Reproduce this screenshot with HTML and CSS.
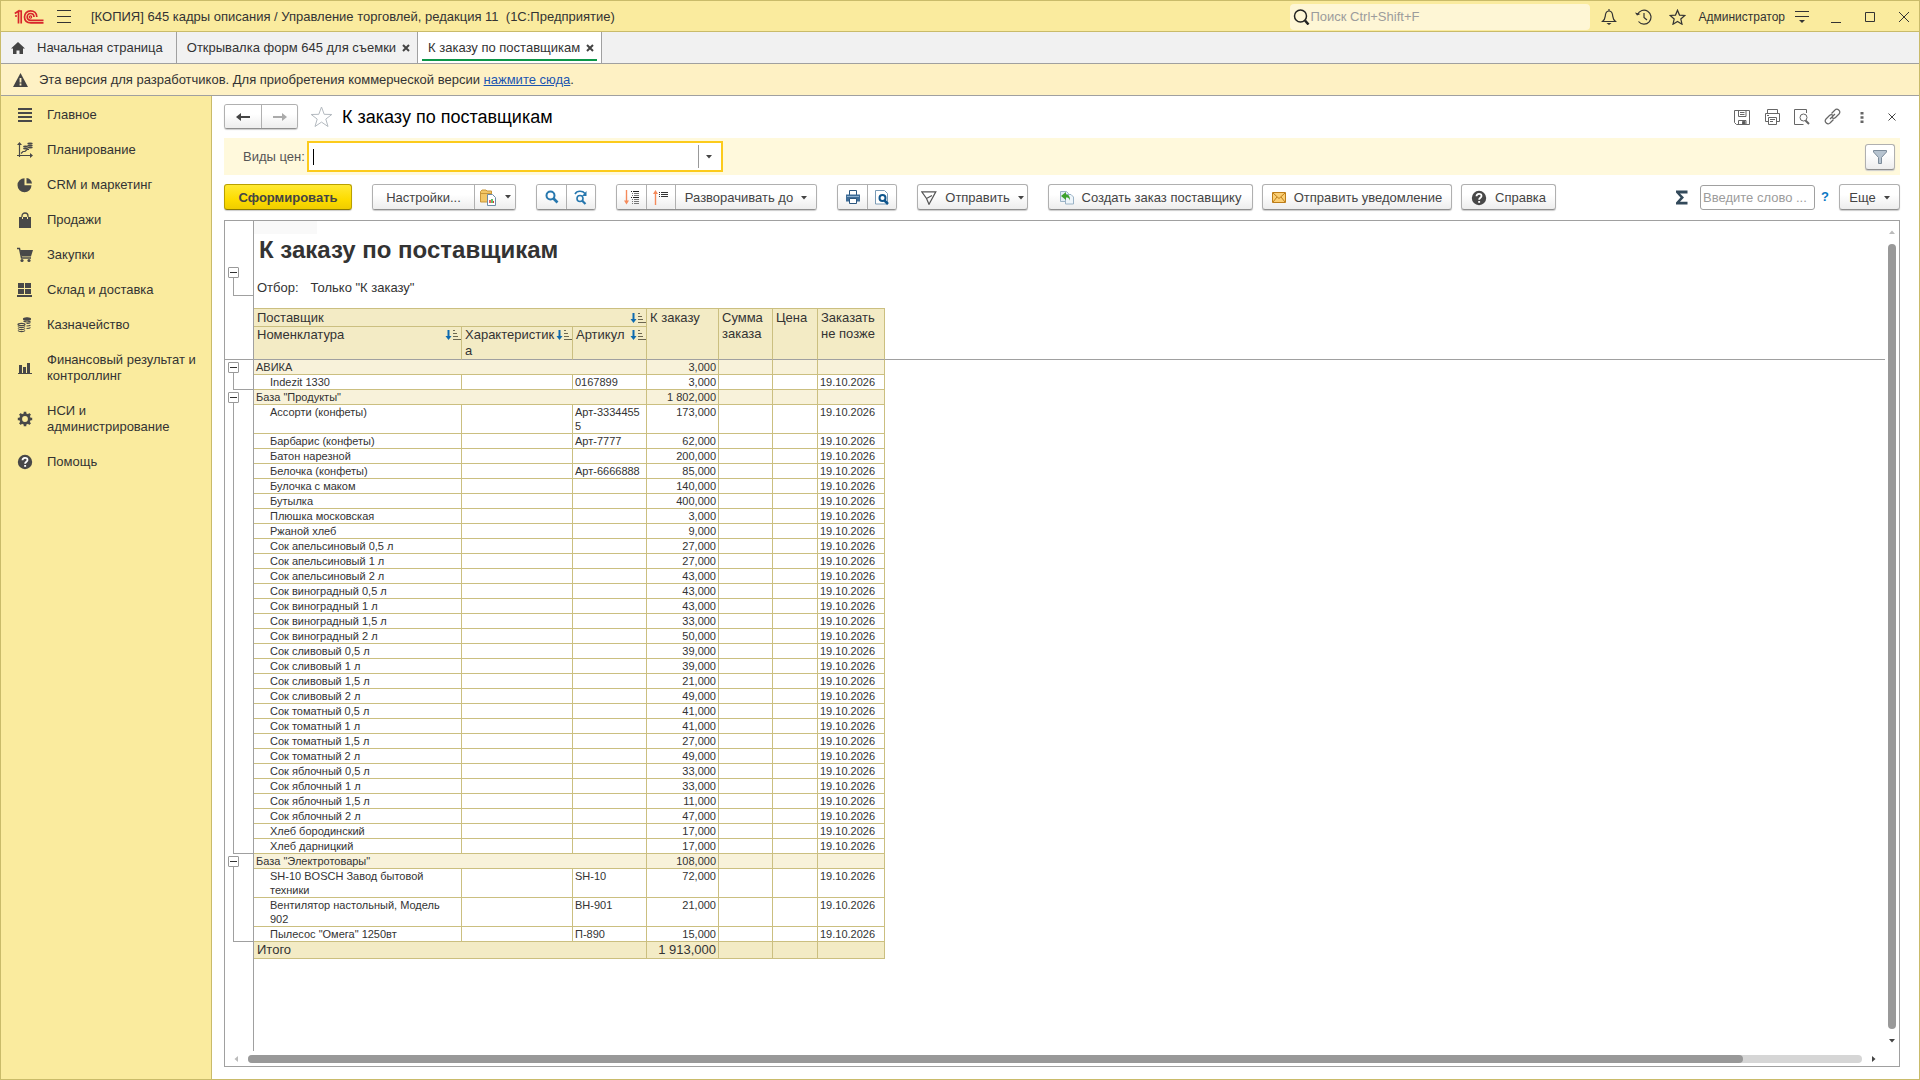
FILE: index.html
```html
<!DOCTYPE html>
<html lang="ru">
<head>
<meta charset="utf-8">
<title>К заказу по поставщикам</title>
<link rel="stylesheet" href="styles.css">
</head>
<body>
<svg class="defs" aria-hidden="true">
  <symbol id="sort" viewBox="0 0 16 12"><path d="M3.500 1v7" stroke="#0d6ab0" stroke-width="2"/><path d="M.500 7h6L3.500 11z" fill="#0d6ab0"/><path d="M8 1.500h2M8 4.500h4M8 7.500h5M8 10.500h8" stroke="#6b6650"/></symbol>
  <symbol id="caret" viewBox="0 0 6 4"><path d="M0 0h6L3 3.500z" fill="#444"/></symbol>
  <symbol id="help" viewBox="0 0 16 16"><circle cx="8" cy="8" r="7.200" fill="#484848"/><path d="M5.500 6.300C5.500 3 10.500 3 10.500 6c0 1.700-2.400 1.700-2.400 3.800" fill="none" stroke="#fff" stroke-width="1.800"/><path d="M7.200 11h1.900v1.800H7.200z" fill="#fff"/></symbol>
  <symbol id="cross" viewBox="0 0 8 8"><path d="M1 1l6 6M7 1L1 7" stroke="#444" stroke-width="2"/></symbol>
</svg>

<header class="titlebar">
  <svg class="logo" width="30" height="16" viewBox="0 0 30 16" fill="none" stroke="#d8262c"><path d="M.8 4.500L4.500 2v12.500M1 7h2M7.200 14.500V2H4.500M29.500 13.800H17C13 13.800 10.500 11.500 10.500 8S13 1.800 16.500 1.800c3.500 0 6.300 2.400 6.300 6.200M29.500 11.300H17c-2.500 0-3.800-1.400-3.800-3.300s1.400-3.500 3.300-3.500S20 5.700 20 8" stroke-width="1.700"/><circle cx="16.500" cy="8" r="1.200" stroke-width="1.200"/></svg>
  <button class="plain menu" aria-label="Меню"><svg width="14" height="13" viewBox="0 0 14 13"><path d="M0 .5h14M0 6.500h14M0 12.500h14" stroke="#333"/></svg></button>
  <h1 class="app-title">[КОПИЯ] 645 кадры описания / Управление торговлей, редакция 11&nbsp; (1С:Предприятие)</h1>
  <label class="search">
    <svg width="17" height="16" viewBox="0 0 17 16" fill="none" stroke="#222"><circle cx="7.500" cy="7" r="6" stroke-width="1.500"/><path d="M12 11.500l3.500 4" stroke-width="2.500"/></svg>
    <input type="text" placeholder="Поиск Ctrl+Shift+F" aria-label="Поиск">
  </label>
  <div class="title-icons">
    <button class="plain" aria-label="Уведомления"><svg width="16" height="16" viewBox="0 0 16 16" fill="none" stroke="#333" stroke-width="1.200"><path d="M1.500 12.500C4.500 10 4 8.500 4.500 5.500 5 3 6.500 2 8 2s3 1 3.500 3.500c.5 3 0 4.500 3 7zM8 0v2"/><path d="M5.500 14h5L8 16z" fill="#333" stroke="none"/></svg></button>
    <button class="plain" aria-label="История"><svg width="17" height="16" viewBox="0 0 17 16" fill="none" stroke="#333" stroke-width="1.200"><path d="M2.500 5.500A7 7 0 1 1 3.500 12.500M9 4v4.500l3 2.500"/><path d="M0 3.500l2 3 3.500-1.500z" fill="#333" stroke="none"/></svg></button>
    <button class="plain" aria-label="Избранное"><svg width="17" height="16" viewBox="0 0 17 16" fill="none" stroke="#333" stroke-width="1.200"><path d="M8.500 1.200l2 4.900 5.300.4-4 3.500 1.200 5.200-4.500-2.800L4 15.200 5.200 10l-4-3.500 5.300-.4z"/></svg></button>
  </div>
  <a class="user" href="#">Администратор</a>
  <div class="title-icons window-icons">
    <button class="plain" aria-label="Настройки окна"><svg width="14" height="14" viewBox="0 0 14 14"><path d="M0 1.500h14M0 6.500h14" stroke="#333"/><path d="M4 10h6l-3 3z" fill="#333"/></svg></button>
    <button class="plain" aria-label="Свернуть"><svg width="10" height="12" viewBox="0 0 10 12"><path d="M0 11.500h10" stroke="#333"/></svg></button>
    <button class="plain" aria-label="Развернуть"><svg width="10" height="10" viewBox="0 0 10 10"><path d="M.5 .5h9v9h-9z" fill="none" stroke="#333"/></svg></button>
    <button class="plain" aria-label="Закрыть"><svg width="12" height="12" viewBox="0 0 12 12"><path d="M1 1l10 10M11 1L1 11" stroke="#333"/></svg></button>
  </div>
</header>

<nav class="tabs">
  <a class="tab home" href="#"><svg width="14" height="12" viewBox="0 0 14 12"><path d="M7 0l7 6.500h-2V12H8.500V8.500h-3V12H2V6.500H0z" fill="#444"/></svg>Начальная страница</a>
  <div class="tab"><a href="#">Открывалка форм 645 для съемки</a><button class="plain" aria-label="Закрыть"><svg width="8" height="8"><use href="#cross"/></svg></button></div>
  <div class="tab active"><a href="#">К заказу по поставщикам</a><button class="plain" aria-label="Закрыть"><svg width="8" height="8"><use href="#cross"/></svg></button></div>
</nav>

<div class="notice">
  <svg width="15" height="14" viewBox="0 0 15 14"><path d="M7.500 0L15 14H0z" fill="#444"/><path d="M7.500 5v4.500M7.500 10.500v2" stroke="#fef1c4" stroke-width="1.800"/></svg>
  <p>Эта версия для разработчиков. Для приобретения коммерческой версии <a href="#">нажмите сюда</a>.</p>
</div>

<div class="workspace">
  <nav class="sidebar">
    <a href="#"><svg width="16" height="16" viewBox="0 0 16 16"><path d="M1 2h14M1 6h14M1 10h14M1 14h14" stroke="#484848" stroke-width="2"/></svg>Главное</a>
    <a href="#"><svg width="16" height="16" viewBox="0 0 16 16"><path d="M2.500 15V2M0 13.500h14M4 11.500l2-2h2l2-2h2" fill="none" stroke="#484848" stroke-width="1.200"/><path d="M0 3l2.500-3L5 3zM13 11l3 2.500-3 2.500z" fill="#484848"/><g fill="#484848"><ellipse cx="8.500" cy="4.500" rx="2.500" ry="1"/><ellipse cx="8.500" cy="6.500" rx="2.500" ry="1"/><ellipse cx="13" cy="1.500" rx="2.800" ry="1"/><ellipse cx="13" cy="3.500" rx="2.800" ry="1"/><ellipse cx="13" cy="5.500" rx="2.800" ry="1"/></g></svg>Планирование</a>
    <a href="#"><svg width="16" height="16" viewBox="0 0 16 16" fill="#484848"><path d="M7.500 1.200v7h7A7 7 0 1 1 7.500 1.200z"/><path d="M9.500 1a6.500 6.500 0 0 1 5.500 5.500H9.500z"/></svg>CRM и маркетинг</a>
    <a href="#"><svg width="16" height="16" viewBox="0 0 16 16"><path d="M2 5h12v11H2z" fill="#484848"/><path d="M5 7V4c0-4 6-4 6 0v3" fill="none" stroke="#484848" stroke-width="1.300"/><path d="M5.500 5v2M10.500 5v2" stroke="#faeb9e"/></svg>Продажи</a>
    <a href="#"><svg width="16" height="16" viewBox="0 0 16 16"><path d="M0 1.500h2.500l2 9.500H14" fill="none" stroke="#484848" stroke-width="1.400"/><path d="M3 3h13l-2 6.500H4.500z" fill="#484848"/><circle cx="5" cy="13.500" r="1.600" fill="#484848"/><circle cx="12" cy="13.500" r="1.600" fill="#484848"/></svg>Закупки</a>
    <a href="#"><svg width="16" height="16" viewBox="0 0 16 16" fill="#484848"><path d="M1 1h6v5H1zM8 1h6v5H8zM1 7h6v5H1zM8 7h6v5H8zM0 13h15v2H0z"/></svg>Склад и доставка</a>
    <a href="#"><svg width="16" height="16" viewBox="0 0 16 16" fill="none" stroke="#484848" stroke-width="1.200"><ellipse cx="10" cy="2" rx="3.500" ry="1.200" fill="#484848"/><ellipse cx="4.500" cy="7.500" rx="3.500" ry="1.200"/><path d="M1 9.500c1 1.600 6 1.600 7 0M1 11.500c1 1.600 6 1.600 7 0M1 13.500c1 1.600 6 1.600 7 0M6.500 4c1.500 1.300 5.500 1.300 7 0M9.500 6.500c2 0 3.500-.3 4-1M9.500 9c2 0 3.500-.3 4-1M9.500 11.500c2 0 3.500-.3 4-1"/></svg>Казначейство</a>
    <a href="#"><svg width="16" height="16" viewBox="0 0 16 16" fill="#484848"><path d="M2 5h3v8H2zM6 7h3v6H6zM10 3h3v10h-3zM1 13h14v1H1z"/></svg>Финансовый результат и контроллинг</a>
    <a href="#"><svg width="16" height="16" viewBox="0 0 16 16" fill="none" stroke="#484848"><circle cx="8" cy="8" r="4.300" stroke-width="2.800"/><path d="M8 .8v2.700M8 12.500v2.700M.8 8h2.700M12.500 8h2.700M2.900 2.900l1.900 1.900M11.200 11.200l1.900 1.900M2.900 13.100l1.900-1.900M11.200 4.800l1.900-1.900" stroke-width="2.600"/></svg>НСИ и администрирование</a>
    <a href="#"><svg width="16" height="16"><use href="#help"/></svg>Помощь</a>
  </nav>

  <main class="content">
    <div class="form-head">
      <div class="group nav-buttons">
        <button aria-label="Назад"><svg width="14" height="10" viewBox="0 0 14 10"><path d="M4 5h10" stroke="#444" stroke-width="2"/><path d="M5 1v8L0 5z" fill="#444"/></svg></button>
        <button aria-label="Вперед"><svg width="14" height="10" viewBox="0 0 14 10"><path d="M0 5h10" stroke="#aaa" stroke-width="2"/><path d="M9 1v8l5-4z" fill="#aaa"/></svg></button>
      </div>
      <button class="plain star" aria-label="В избранное"><svg width="23" height="22" viewBox="0 0 23 22"><path d="M11.500 1l2.700 7.300 7.600.2-6 4.600 2.200 7.400-6.500-4.400L5 20.500l2.200-7.400-6-4.600 7.600-.2z" fill="none" stroke="#b4bac0"/></svg></button>
      <h2>К заказу по поставщикам</h2>
      <div class="form-icons">
        <button class="plain" aria-label="Сохранить"><svg width="16" height="16" viewBox="0 0 16 16" fill="none" stroke="#666"><path d="M.5 1.500h15v14H2.500l-2-2zM4.500 1.500v6h7.500v-6M6 3.500h4.500M6 5.500h4.500M4.500 15.500v-4H12v4"/><path d="M8.500 12.500H11v3H8.500z" fill="#555"/></svg></button>
        <button class="plain" aria-label="Печать"><svg width="17" height="16" viewBox="0 0 17 16" fill="none" stroke="#666"><path d="M3.500 4V.5h10V4M4 12.500H1.500V4.500h14v8H13M4.500 8.500h8v7h-8zM6 10.500h5M6 12.500h3M3 6.500h2"/></svg></button>
        <button class="plain" aria-label="Просмотр"><svg width="16" height="16" viewBox="0 0 16 16" fill="none" stroke="#666"><path d="M12.500 4V.5H.5v15h9"/><circle cx="9.500" cy="8.500" r="3.500"/><path d="M11.500 11.500l3.500 3.500" stroke-width="2"/></svg></button>
        <button class="plain" aria-label="Ссылка"><svg width="17" height="17" viewBox="0 0 17 17" fill="none" stroke="#666" stroke-width="1.200"><path d="M6 11l5-5M7.500 5.500L11 2c2-2.500 6.500 1 4 4l-3.500 3.500C10.500 10.500 9 10.500 8 9.500M9.500 11.500L6 15c-2 2.500-6.500-1-4-4l3.500-3.500C6.500 6.500 8 6.500 9 7.500"/></svg></button>
        <button class="plain" aria-label="Еще"><svg width="4" height="14" viewBox="0 0 4 14" fill="#666"><path d="M.5 2h3v2.500h-3zM.5 6.200h3v2.500h-3zM.5 10.400h3v2.500h-3z"/></svg></button>
        <button class="plain" aria-label="Закрыть"><svg width="8" height="8" viewBox="0 0 8 8"><path d="M.5.5l7 7M7.500.5l-7 7" stroke="#444"/></svg></button>
      </div>
    </div>

    <div class="filter">
      <label for="price">Виды цен:</label>
      <div class="combo">
        <span class="cursor"></span>
        <input id="price" type="text">
        <button class="plain" aria-label="Выбрать"><svg width="6" height="4"><use href="#caret"/></svg></button>
      </div>
      <button class="btn funnel" aria-label="Фильтр"><svg width="14" height="14" viewBox="0 0 14 14"><path d="M.5.500h13v1.500L8.500 7.500v6h-3v-6L.5 2z" fill="#b7c4d0" stroke="#7d8c9a"/></svg></button>
    </div>

    <div class="toolbar">
      <button class="btn primary">Сформировать</button>
      <div class="group">
        <button class="wide">Настройки...</button>
        <button class="variants" aria-label="Варианты отчета"><svg width="17" height="17" viewBox="0 0 17 17"><path d="M.5 2.500L2 1h4l1 1h4.500v11H.5z" fill="#f3c766" stroke="#c9973a"/><path d="M.5 4.500h11" stroke="#c9973a"/><path d="M7.500 5.500h5l3 3v8h-8z" fill="#fff" stroke="#6d8ba5"/><path d="M10 14v-3" stroke="#d33" stroke-width="1.500"/><path d="M12 14v-4" stroke="#3a3" stroke-width="1.500"/><path d="M13.500 14v-2" stroke="#d33"/></svg><svg width="6" height="4"><use href="#caret"/></svg></button>
      </div>
      <div class="group icons">
        <button aria-label="Найти"><svg width="14" height="14" viewBox="0 0 14 14" fill="none" stroke="#2677ae"><circle cx="5.500" cy="5.500" r="4" stroke-width="2"/><path d="M8.500 8.500l4 4" stroke-width="2.600"/></svg></button>
        <button aria-label="Найти далее"><svg width="15" height="15" viewBox="0 0 15 15" fill="none" stroke="#2677ae"><circle cx="6" cy="8.500" r="3" stroke-width="1.600"/><path d="M8 10.500l3.500 3.500" stroke-width="2.200"/><path d="M1 4c2-3.500 7.500-3.500 10-.5" stroke-width="1.600"/><path d="M12.500 1v5H8z" fill="#2677ae" stroke="none"/></svg></button>
      </div>
      <div class="group icons">
        <button aria-label="Развернуть все"><svg width="16" height="15" viewBox="0 0 16 15"><path d="M2.500 0v12" stroke="#f58a5b" stroke-width="1.400"/><path d="M0 10.500h5L2.500 14.500z" fill="#f58a5b"/><path d="M7 1.500h1M9 1.500h6M7 7.500h1M9 7.500h6" stroke="#222"/><path d="M8 3.500h1M10 3.500h5M8 5.500h1M10 5.500h5M8 9.500h1M10 9.500h5M8 11.500h1M10 11.500h5M8 13.500h1M10 13.500h5" stroke="#777"/></svg></button>
        <button aria-label="Свернуть все"><svg width="16" height="15" viewBox="0 0 16 15"><path d="M2.500 3v12" stroke="#f58a5b" stroke-width="1.400"/><path d="M0 4h5L2.500 0z" fill="#f58a5b"/><path d="M6 2.500h1M8 2.500h7M6 4.500h1M8 4.500h7M6 6.500h1M8 6.500h7" stroke="#333"/></svg></button>
        <button class="drop">Разворачивать до<svg width="6" height="4"><use href="#caret"/></svg></button>
      </div>
      <div class="group icons">
        <button aria-label="Печать"><svg width="14" height="14" viewBox="0 0 14 14"><path d="M3.500 5V.5h7V5" fill="#fff" stroke="#2b567f"/><path d="M0 4.500h14v7H0z" fill="#3f6d98"/><path d="M3.500 8.500h7v5h-7z" fill="#fff" stroke="#2b567f"/><path d="M1 6.500h12" stroke="#8db0cf"/></svg></button>
        <button aria-label="Предварительный просмотр"><svg width="14" height="15" viewBox="0 0 14 15"><path d="M.5.500h9l3 3V14H.5z" fill="#fff" stroke="#7a9ab5"/><circle cx="7.500" cy="8" r="3" fill="none" stroke="#0e558c" stroke-width="2"/><path d="M9.500 10.500l3.500 3.500" stroke="#0e558c" stroke-width="2.500"/></svg></button>
      </div>
      <button class="btn send"><svg width="16" height="14" viewBox="0 0 16 14"><path d="M.8.800h14L8 13.300 5.500 7.500zM5.500 7.500l5.500-3" fill="none" stroke="#555" stroke-width="1.200"/></svg>Отправить<svg width="6" height="4"><use href="#caret"/></svg></button>
      <div class="commands">
        <button class="btn create"><svg width="14" height="15" viewBox="0 0 14 15"><path d="M.5 1.500h6l2 2v8h-8z" fill="#e4eef6" stroke="#9bb3c6"/><path d="M5.500 4.500h5.500l2.500 2.500v7h-8z" fill="#eef5fa" stroke="#9bb3c6"/><path d="M1 6l5-4v2.500c3.500 0 4 3 4 6C9 8 8 7.500 6 7.500V10z" fill="#3da22c"/></svg>Создать заказ поставщику</button>
        <button class="btn notify"><svg width="14" height="11" viewBox="0 0 14 11"><path d="M.5 .5h13v10H.5z" fill="#fbcf75" stroke="#bd7d18"/><path d="M1 1l6 5.500L13 1M1 10l4-5M13 10L9 5" fill="none" stroke="#bd7d18"/></svg>Отправить уведомление</button>
        <button class="btn about"><svg width="16" height="16"><use href="#help"/></svg>Справка</button>
      </div>
      <div class="right-tools">
        <button class="plain" aria-label="Сумма"><svg width="12" height="15" viewBox="0 0 12 15"><path d="M0 .5h11.500v3H4l4 4-4 4.300h7.500v2.700H0v-2l4.500-5L0 2.500z" fill="#32495a"/></svg></button>
        <input type="text" placeholder="Введите слово ..." aria-label="Поиск слова">
        <a class="hint" href="#">?</a>
        <button class="btn more">Еще<svg width="6" height="4"><use href="#caret"/></svg></button>
      </div>
    </div>

    <section class="sheet">
      <div class="canvas">
        <div class="sheet-top">
          <div class="gutter"><button class="toggle" aria-label="Свернуть"></button></div>
          <div class="sheet-title">
            <span class="cell-mark"></span>
            <h3>К заказу по поставщикам</h3>
            <p><span>Отбор:</span><span>Только "К заказу"</span></p>
          </div>
        </div>
        <table>
          <colgroup><col class="c-tree"><col class="c-name"><col class="c-char"><col class="c-art"><col class="c-qty"><col class="c-sum"><col class="c-price"><col class="c-date"><col></colgroup>
          <thead>
            <tr><td class="tree" rowspan="2"></td><th colspan="3"><div>Поставщик<svg width="16" height="12"><use href="#sort"/></svg></div></th><th rowspan="2">К заказу</th><th rowspan="2">Сумма заказа</th><th rowspan="2">Цена</th><th rowspan="2">Заказать не позже</th><td class="rest" rowspan="2"></td></tr>
            <tr><th><div>Номенклатура<svg width="16" height="12"><use href="#sort"/></svg></div></th><th><div>Характеристика<svg width="16" height="12"><use href="#sort"/></svg></div></th><th><div>Артикул<svg width="16" height="12"><use href="#sort"/></svg></div></th></tr>
          </thead>
          <tbody>
            <tr class="grp"><td class="tree" rowspan="2"><button class="toggle" aria-label="Свернуть"></button></td><td colspan="3">АВИКА</td><td>3,000</td><td></td><td></td><td></td></tr>
            <tr><td>Indezit 1330</td><td></td><td>0167899</td><td>3,000</td><td></td><td></td><td>19.10.2026</td></tr>
          </tbody>
          <tbody>
            <tr class="grp"><td class="tree" rowspan="30"><button class="toggle" aria-label="Свернуть"></button></td><td colspan="3">База "Продукты"</td><td>1 802,000</td><td></td><td></td><td></td></tr>
            <tr><td>Ассорти (конфеты)</td><td></td><td>Арт-33344555</td><td>173,000</td><td></td><td></td><td>19.10.2026</td></tr>
            <tr><td>Барбарис (конфеты)</td><td></td><td>Арт-7777</td><td>62,000</td><td></td><td></td><td>19.10.2026</td></tr>
            <tr><td>Батон нарезной</td><td></td><td></td><td>200,000</td><td></td><td></td><td>19.10.2026</td></tr>
            <tr><td>Белочка (конфеты)</td><td></td><td>Арт-6666888</td><td>85,000</td><td></td><td></td><td>19.10.2026</td></tr>
            <tr><td>Булочка с маком</td><td></td><td></td><td>140,000</td><td></td><td></td><td>19.10.2026</td></tr>
            <tr><td>Бутылка</td><td></td><td></td><td>400,000</td><td></td><td></td><td>19.10.2026</td></tr>
            <tr><td>Плюшка московская</td><td></td><td></td><td>3,000</td><td></td><td></td><td>19.10.2026</td></tr>
            <tr><td>Ржаной хлеб</td><td></td><td></td><td>9,000</td><td></td><td></td><td>19.10.2026</td></tr>
            <tr><td>Сок апельсиновый 0,5 л</td><td></td><td></td><td>27,000</td><td></td><td></td><td>19.10.2026</td></tr>
            <tr><td>Сок апельсиновый 1 л</td><td></td><td></td><td>27,000</td><td></td><td></td><td>19.10.2026</td></tr>
            <tr><td>Сок апельсиновый 2 л</td><td></td><td></td><td>43,000</td><td></td><td></td><td>19.10.2026</td></tr>
            <tr><td>Сок виноградный 0,5 л</td><td></td><td></td><td>43,000</td><td></td><td></td><td>19.10.2026</td></tr>
            <tr><td>Сок виноградный 1 л</td><td></td><td></td><td>43,000</td><td></td><td></td><td>19.10.2026</td></tr>
            <tr><td>Сок виноградный 1,5 л</td><td></td><td></td><td>33,000</td><td></td><td></td><td>19.10.2026</td></tr>
            <tr><td>Сок виноградный 2 л</td><td></td><td></td><td>50,000</td><td></td><td></td><td>19.10.2026</td></tr>
            <tr><td>Сок сливовый 0,5 л</td><td></td><td></td><td>39,000</td><td></td><td></td><td>19.10.2026</td></tr>
            <tr><td>Сок сливовый 1 л</td><td></td><td></td><td>39,000</td><td></td><td></td><td>19.10.2026</td></tr>
            <tr><td>Сок сливовый 1,5 л</td><td></td><td></td><td>21,000</td><td></td><td></td><td>19.10.2026</td></tr>
            <tr><td>Сок сливовый 2 л</td><td></td><td></td><td>49,000</td><td></td><td></td><td>19.10.2026</td></tr>
            <tr><td>Сок томатный 0,5 л</td><td></td><td></td><td>41,000</td><td></td><td></td><td>19.10.2026</td></tr>
            <tr><td>Сок томатный 1 л</td><td></td><td></td><td>41,000</td><td></td><td></td><td>19.10.2026</td></tr>
            <tr><td>Сок томатный 1,5 л</td><td></td><td></td><td>27,000</td><td></td><td></td><td>19.10.2026</td></tr>
            <tr><td>Сок томатный 2 л</td><td></td><td></td><td>49,000</td><td></td><td></td><td>19.10.2026</td></tr>
            <tr><td>Сок яблочный 0,5 л</td><td></td><td></td><td>33,000</td><td></td><td></td><td>19.10.2026</td></tr>
            <tr><td>Сок яблочный 1 л</td><td></td><td></td><td>33,000</td><td></td><td></td><td>19.10.2026</td></tr>
            <tr><td>Сок яблочный 1,5 л</td><td></td><td></td><td>11,000</td><td></td><td></td><td>19.10.2026</td></tr>
            <tr><td>Сок яблочный 2 л</td><td></td><td></td><td>47,000</td><td></td><td></td><td>19.10.2026</td></tr>
            <tr><td>Хлеб бородинский</td><td></td><td></td><td>17,000</td><td></td><td></td><td>19.10.2026</td></tr>
            <tr><td>Хлеб дарницкий</td><td></td><td></td><td>17,000</td><td></td><td></td><td>19.10.2026</td></tr>
          </tbody>
          <tbody>
            <tr class="grp"><td class="tree" rowspan="4"><button class="toggle" aria-label="Свернуть"></button></td><td colspan="3">База "Электротовары"</td><td>108,000</td><td></td><td></td><td></td></tr>
            <tr><td>SH-10 BOSCH Завод бытовой техники</td><td></td><td>SH-10</td><td>72,000</td><td></td><td></td><td>19.10.2026</td></tr>
            <tr><td>Вентилятор настольный, Модель 902</td><td></td><td>ВН-901</td><td>21,000</td><td></td><td></td><td>19.10.2026</td></tr>
            <tr><td>Пылесос "Омега" 1250вт</td><td></td><td>П-890</td><td>15,000</td><td></td><td></td><td>19.10.2026</td></tr>
          </tbody>
          <tfoot>
            <tr><td class="tree"></td><td colspan="3">Итого</td><td>1 913,000</td><td></td><td></td><td></td></tr>
          </tfoot>
        </table>
      </div>
      <div class="vbar"><svg width="8" height="4" viewBox="0 0 8 4"><path d="M1 4h6L4 .5z" fill="#bbb"/></svg><span class="thumb"></span><svg width="8" height="4" viewBox="0 0 8 4"><path d="M1 0h6L4 3.500z" fill="#444"/></svg></div>
      <div class="hbar"><svg width="4" height="8" viewBox="0 0 4 8"><path d="M4 1v6L.5 4z" fill="#bbb"/></svg><span class="track"><span class="thumb"></span></span><svg width="4" height="8" viewBox="0 0 4 8"><path d="M0 1v6l3.500-3z" fill="#444"/></svg></div>
    </section>
  </main>
</div>
</body>
</html>
```
FILE: styles.css
```css
* { box-sizing: border-box; }
body {
  margin: 0;
  min-height: 100vh;
  display: flex;
  flex-direction: column;
  border: 1px solid #c9bb6a;
  background: #fff;
  color: #333;
  font: 13px/16px "Liberation Sans", Arial, sans-serif;
}
h1, h2, h3, p { margin: 0; font-weight: normal; }
a { color: inherit; text-decoration: none; }
button, input { font: inherit; color: inherit; }
button { cursor: pointer; }
input { min-width: 0; outline: 0; }
svg { flex: none; display: block; }
.defs { position: absolute; width: 0; height: 0; }
.plain { display: flex; align-items: center; justify-content: center; padding: 0; border: 0; background: none; }

/* Title bar */
.titlebar {
  display: flex;
  align-items: center;
  height: 31px;
  padding: 1px 9px 0 13px;
  background: #faeb9e;
  border-bottom: 1px solid #c9bb6a;
}
.menu { width: 14px; margin: 0 20px 0 13px; }
.app-title { font-size: 13px; line-height: 16px; }
.search {
  display: flex;
  align-items: center;
  width: 300px;
  height: 26px;
  margin-left: auto;
  padding-left: 3px;
  border-radius: 4px;
  background: #fef6d5;
}
.search input { flex: 1; padding: 0; border: 0; background: none; }
input::placeholder { color: #9c9c9c; opacity: 1; }
.title-icons { display: flex; gap: 4px; margin-left: 4px; }
.title-icons .plain { width: 30px; height: 29px; }
.user { margin-left: 6px; font-size: 12px; }
.window-icons { margin-left: 2px; }
.window-icons .plain:last-child { margin-right: -9px; }

/* Tabs */
.tabs { display: flex; height: 32px; background: #f1f1f1; border-bottom: 1px solid #a0a0a0; }
.tab { display: flex; align-items: center; gap: 6px; padding: 0 7px 0 10px; border-right: 1px solid #a0a0a0; }
.home { gap: 12px; padding-right: 13px; }
.active { background: #fff linear-gradient(#0c9648, #0c9648) 50% 27px / calc(100% - 8px) 2px no-repeat; }

.notice {
  display: flex;
  align-items: center;
  gap: 11px;
  height: 32px;
  padding: 1px 0 0 12px;
  background: #fef1c4;
  border-bottom: 1px solid #a0a0a0;
}
.notice a { color: #1b55b0; text-decoration: underline; }

.workspace { flex: 1; display: flex; }

/* Sections panel */
.sidebar { flex: none; width: 211px; background: #faeb9e; border-right: 1px solid #c9bb6a; }
.sidebar a { display: flex; align-items: center; gap: 14px; padding: 11px 12px 8px 16px; }

/* Form */
.content { flex: 1; min-width: 0; display: flex; flex-direction: column; padding: 8px 19px 12px 12px; }
.form-head { display: flex; align-items: center; height: 25px; }
.form-head h2 { font-size: 18px; line-height: 24px; color: #000; }
.group { display: flex; height: 26px; border: 1px solid #b0b0b0; border-bottom-color: #8f8f8f; border-radius: 3px; box-shadow: 0 1px 1px #ccc; }
.group button, .btn {
  display: flex;
  align-items: center;
  justify-content: center;
  gap: 8px;
  padding: 1px 8px 0;
  border: 0;
  background: linear-gradient(#fff 40%, #ededed);
  color: #444;
  white-space: nowrap;
}
.group button { border-radius: 2px; }
.group button + button { border-left: 1px solid #b0b0b0; border-radius: 0 2px 2px 0; }
.btn { height: 26px; border: 1px solid #b0b0b0; border-bottom-color: #8f8f8f; border-radius: 3px; box-shadow: 0 1px 1px #ccc; }
.nav-buttons { height: 25px; }
.nav-buttons button { width: 36px; padding: 0; }
.star { margin: 0 9px 0 12px; }
.form-icons { display: flex; margin-left: auto; margin-right: -7px; }
.form-icons .plain { width: 30px; height: 24px; }

.filter { display: flex; align-items: center; height: 37px; margin-top: 9px; padding: 0 5px 0 19px; background: #fff9dc; color: #555; }
.combo { display: flex; align-items: center; width: 416px; height: 31px; margin-left: 2px; padding: 2px; border: 2px solid #fccb1c; background: #fff; }
.cursor { width: 1px; height: 16px; margin-left: 2px; background: #000; }
.combo input { flex: 1; border: 0; padding: 0 4px; }
.combo .plain { width: 21px; align-self: stretch; border-left: 1px solid #999; }
.funnel { width: 30px; margin-left: auto; padding: 0; }

.toolbar { display: flex; gap: 20px; margin-top: 9px; }
.primary { width: 128px; border-color: #b9a000 #b9a000 #8d7a00; background: linear-gradient(#ffe934, #fddc00 60%, #efcd00); font-weight: bold; }
.wide { width: 101px; }
.group .variants { width: 41px; padding: 0; }
.icons button { width: 29px; padding: 0; }
.icons .drop { width: 141px; padding-top: 1px; }
.send { width: 111px; }
.commands { display: flex; gap: 9px; }
.create { width: 205px; }
.notify { width: 190px; }
.about { width: 95px; }
.right-tools { display: flex; align-items: center; margin-left: auto; }
.right-tools input { width: 115px; height: 25px; margin-left: 12px; padding: 1px 2px 0; border: 1px solid #a0a0a0; border-radius: 3px; }
.hint { margin: 0 10px 0 6px; color: #0b78c4; font-weight: bold; }
.more { width: 61px; }

/* Report sheet */
.sheet {
  flex: 1;
  display: grid;
  grid-template: 1fr 15px / 1fr 14px;
  margin-top: 10px;
  border: 1px solid #a0a0a0;
}
.canvas { background: linear-gradient(#a0a0a0, #a0a0a0) 28px 0 / 1px 100% no-repeat; }
.sheet-top { display: flex; height: 87px; }
.gutter {
  width: 29px;
  height: 75px;
  padding: 46px 0 0 3px;
  background:
    linear-gradient(#a0a0a0, #a0a0a0) 8px 100% / 1px 20px no-repeat,
    linear-gradient(#a0a0a0, #a0a0a0) 8px 100% / 20px 1px no-repeat;
}
.toggle {
  display: block;
  width: 11px;
  height: 11px;
  padding: 0;
  border: 1px solid #999;
  border-radius: 1px;
  background: linear-gradient(#333, #333) 50% 50% / 7px 1px no-repeat #fff;
}
.cell-mark { display: block; width: 63px; height: 13px; background: #f9f9f9; }
.sheet-title h3 { padding: 2px 0 0 5px; font-size: 24px; line-height: 28px; font-weight: bold; }
.sheet-title p { display: flex; gap: 12px; padding: 16px 0 0 3px; }

table { width: 100%; table-layout: fixed; border-spacing: 0; }
.c-tree { width: 29px; }
.c-name { width: 208px; }
.c-char { width: 111px; }
.c-art { width: 74px; }
.c-qty { width: 72px; }
.c-sum { width: 54px; }
.c-price { width: 45px; }
.c-date { width: 67px; }
th, td {
  padding: 0 2px;
  border: 0 solid #cbbf80;
  border-width: 0 1px 1px 0;
  vertical-align: top;
  text-align: left;
  font-weight: normal;
  overflow-wrap: anywhere;
}
th { height: 19px; padding: 1px 0 0 3px; background: #f3ebc5; }
th div { display: flex; justify-content: space-between; }
th svg { margin-top: 2px; }
thead tr:first-child th { border-top-width: 1px; }
thead tr + tr th { height: 33px; padding-top: 0; }
thead tr + tr th, thead th[rowspan], thead .tree, .rest { border-bottom: 1px solid #a0a0a0; }
tbody td { height: 15px; font-size: 11px; line-height: 14px; }
tbody td:first-child { padding-left: 16px; }
td:nth-last-child(4) { text-align: right; }
.grp td { background: #f8f2da; }
.grp td + td { padding-left: 2px; }
td.tree, tbody .grp .tree {
  height: auto;
  padding: 2px 0 0 3px;
  border-width: 0 1px 0 0;
  border-color: #a0a0a0;
  background: none;
  text-align: left;
}
tbody .grp .tree {
  background:
    linear-gradient(#a0a0a0, #a0a0a0) 8px 13px / 1px 100% no-repeat,
    linear-gradient(#a0a0a0, #a0a0a0) 8px 100% / 20px 1px no-repeat;
}
thead td.tree { border-bottom-width: 1px; }
td.rest { border-right: 0; }
tfoot td { height: 17px; padding-left: 3px; background: #f3ebc5; }

.vbar { display: flex; flex-direction: column; align-items: center; gap: 10px; padding: 9px 0 8px; }
.vbar .thumb { flex: 1; width: 8px; border-radius: 4px; background: #999; }
.hbar { grid-column: 1 / -1; display: flex; align-items: center; gap: 10px; padding: 0 23px 0 9px; }
.track { flex: 1; height: 8px; border-radius: 4px; background: #d6d6d6; }
.hbar .thumb { display: block; width: 92.600%; height: 8px; border-radius: 4px; background: #999; }
```
